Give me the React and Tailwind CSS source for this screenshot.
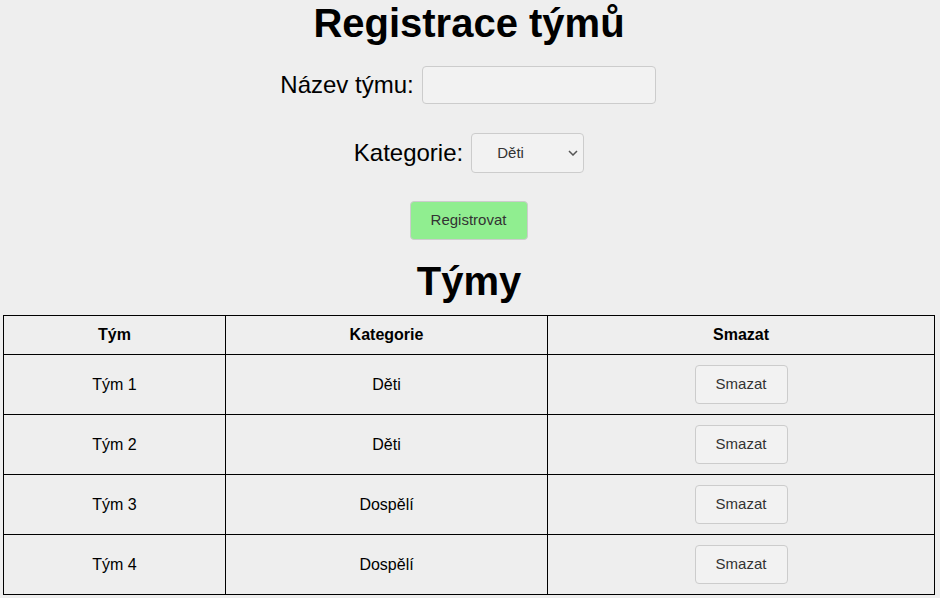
import React from 'react';

const teams = [
  { name: 'Tým 1', category: 'Děti' },
  { name: 'Tým 2', category: 'Děti' },
  { name: 'Tým 3', category: 'Dospělí' },
  { name: 'Tým 4', category: 'Dospělí' },
];

export default function App() {
  return (
    <div className="min-h-screen bg-[#eeeeee] text-black font-['Liberation_Sans',Arial,sans-serif]">
      <div className="flex flex-col items-center pl-[3px] pr-[5px]">
        {/* Form */}
        <h1 className="text-[40px] leading-[46px] font-bold">Registrace týmů</h1>

        <div className="mt-[20px] flex items-center gap-[8px] pr-[2px]">
          <label className="text-[24px] leading-none">Název týmu:</label>
          <input
            type="text"
            className="w-[234px] h-[38px] bg-[#f2f2f2] border border-[#cccccc] rounded-[4px] px-2 text-[16px]"
          />
        </div>

        <div className="mt-[29px] flex items-center gap-[8px]">
          <label className="text-[24px] leading-none">Kategorie:</label>
          <div className="relative">
            <select className="appearance-none w-[113px] h-[40px] bg-[#f2f2f2] border border-[#cccccc] rounded-[4px] pl-[25px] text-[15px] text-[#333333]">
              <option>Děti</option>
              <option>Dospělí</option>
            </select>
            <svg className="absolute right-[6px] top-[17px] pointer-events-none" width="10" height="6" viewBox="0 0 10 6">
              <path d="M1 1 L5 5 L9 1" fill="none" stroke="#555" strokeWidth="1.5" />
            </svg>
          </div>
        </div>

        <button className="mt-[28px] w-[118px] h-[39px] bg-[#90ee90] border border-[#cccccc] rounded-[4px] text-[15px] text-[#333333] mr-[1px]">
          Registrovat
        </button>

        {/* List */}
        <h2 className="mt-[18px] text-[40px] leading-[46px] font-bold">Týmy</h2>

        <table className="mt-[11px] w-[932px] border-collapse text-[16px]">
          <thead>
            <tr className="h-[39px]">
              <th className="w-[222px] border border-black font-bold">Tým</th>
              <th className="w-[322px] border border-black font-bold">Kategorie</th>
              <th className="border border-black font-bold">Smazat</th>
            </tr>
          </thead>
          <tbody>
            {teams.map((t) => (
              <tr key={t.name} className="h-[60px]">
                <td className="border border-black text-center">{t.name}</td>
                <td className="border border-black text-center">{t.category}</td>
                <td className="border border-black text-center">
                  <button className="w-[93px] h-[39px] bg-[#f2f2f2] border border-[#cccccc] rounded-[4px] text-[15px] text-[#333333]">
                    Smazat
                  </button>
                </td>
              </tr>
            ))}
          </tbody>
        </table>
      </div>
    </div>
  );
}
